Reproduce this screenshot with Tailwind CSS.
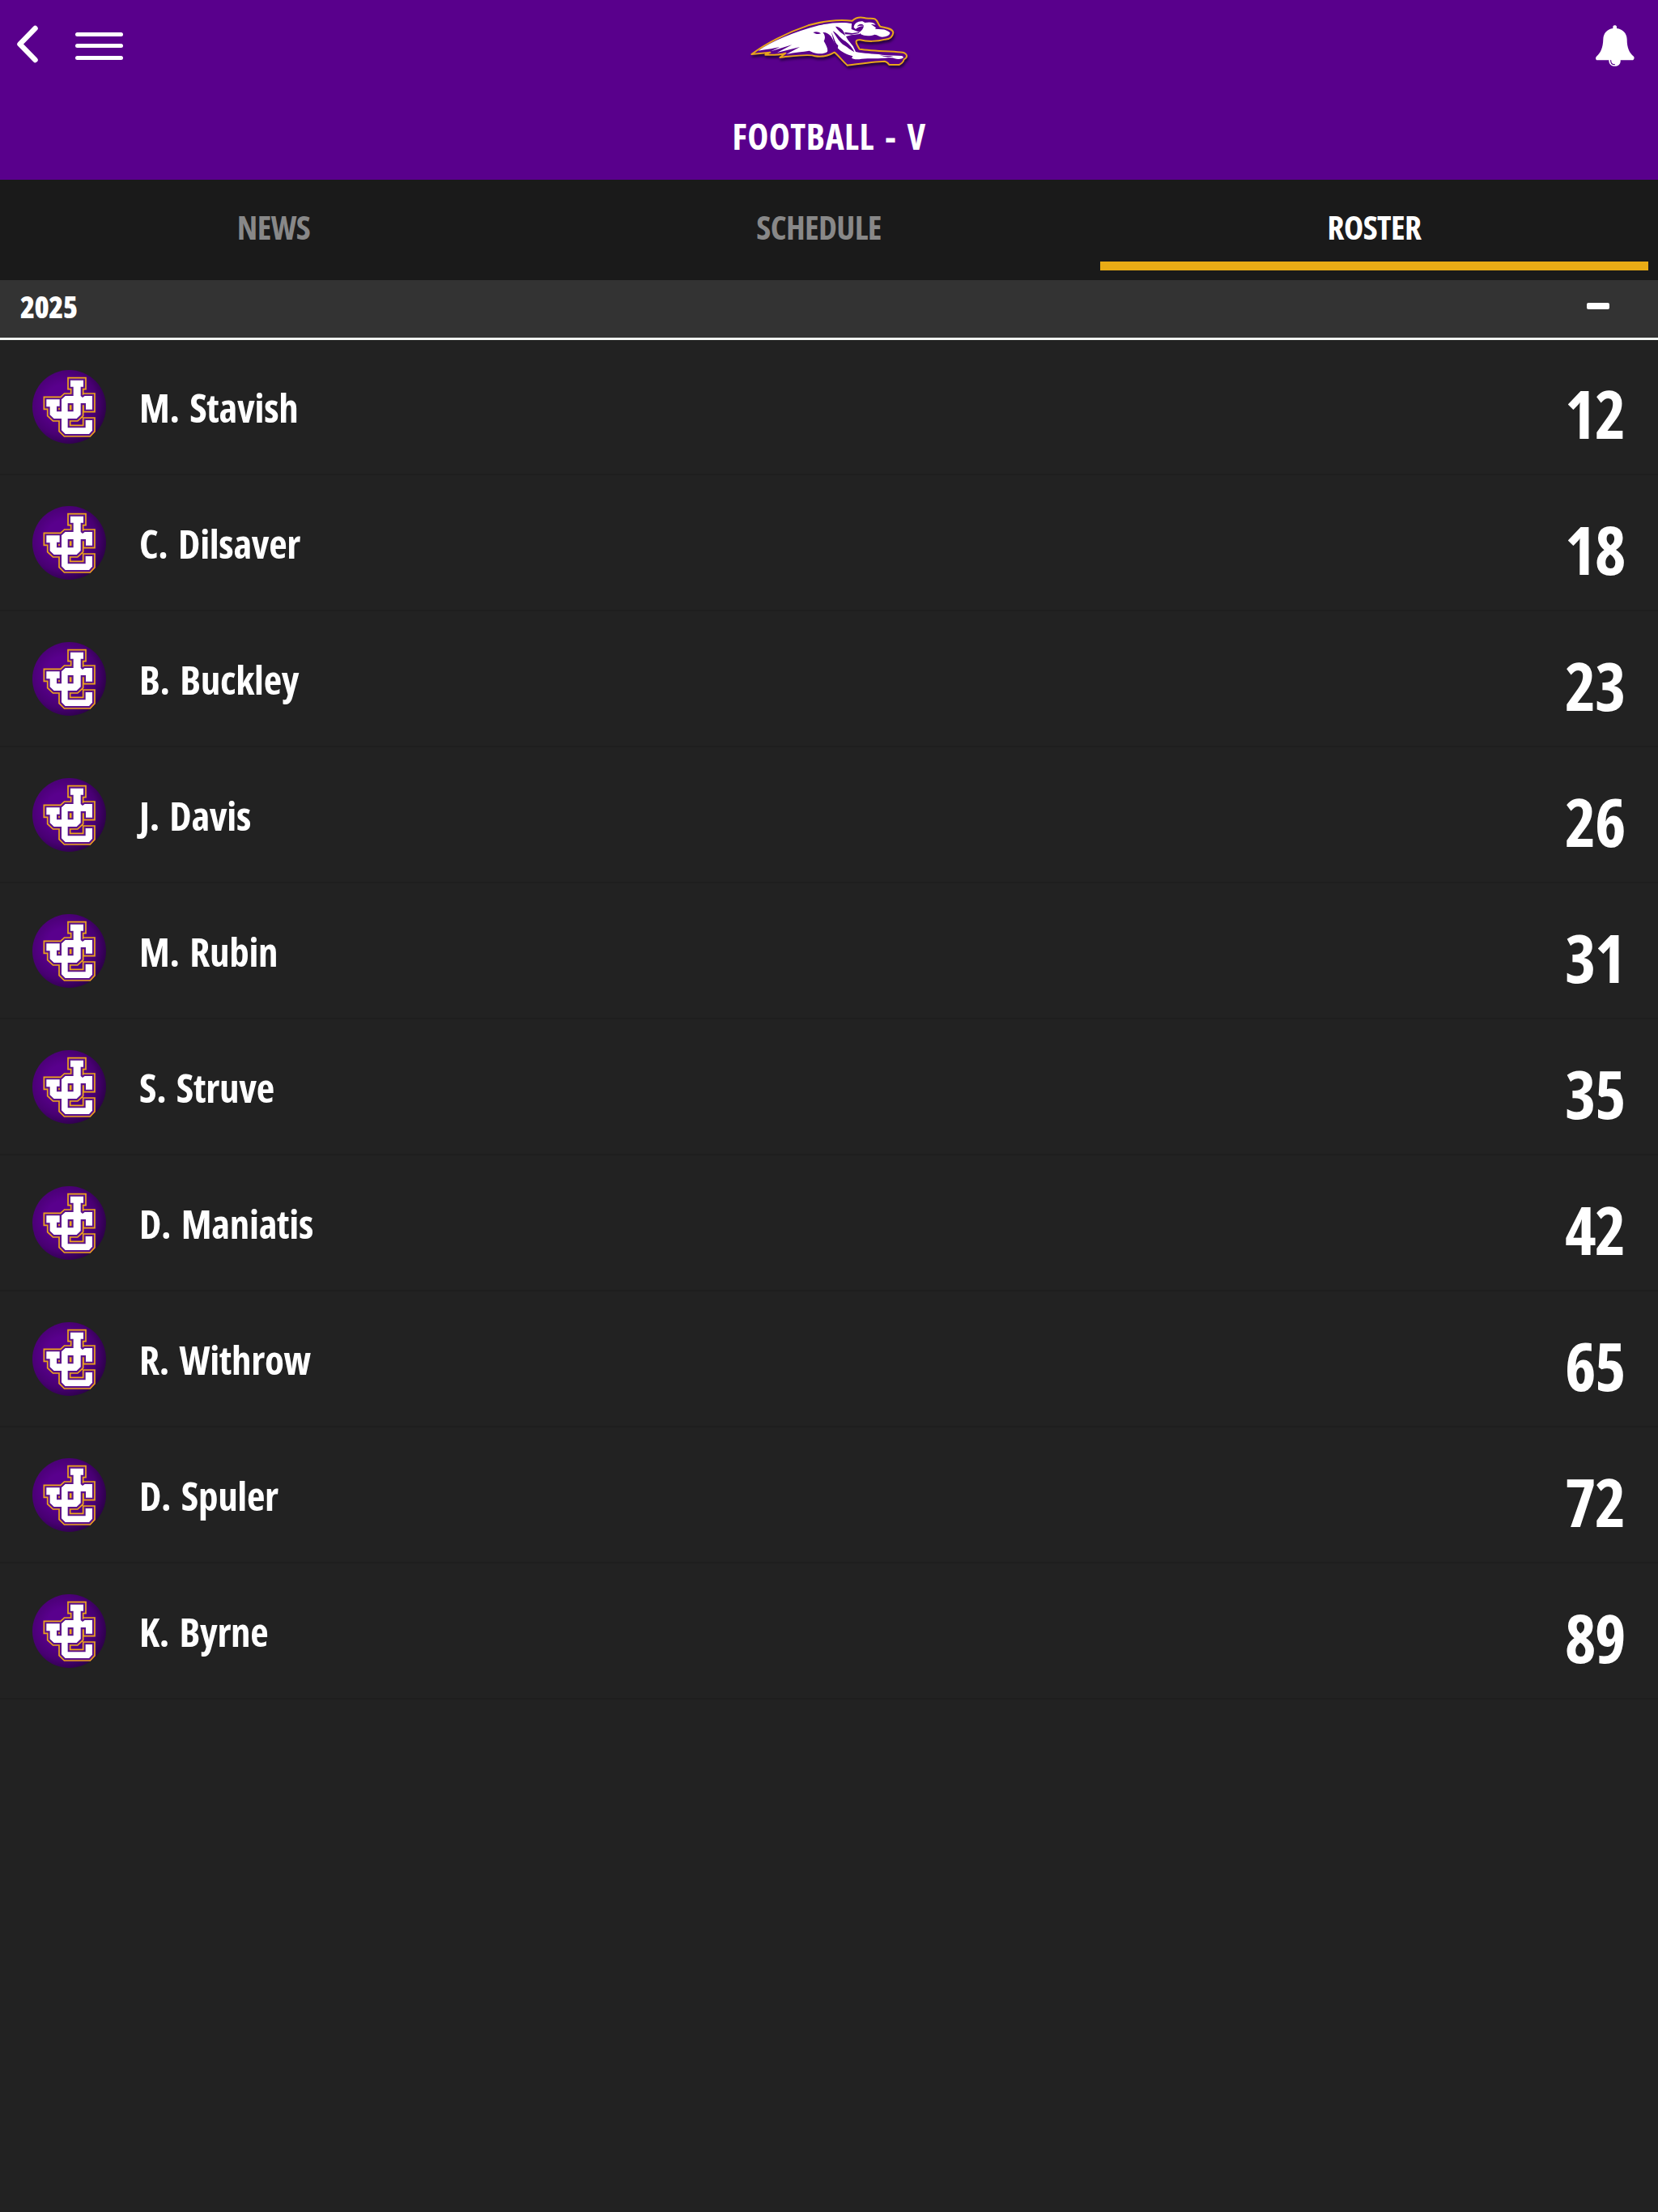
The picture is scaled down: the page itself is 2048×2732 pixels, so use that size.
<!DOCTYPE html>
<html lang="en">

<head>
    <meta charset="UTF-8">
    <meta name="viewport" content="width=device-width, initial-scale=1.0">
    <title>Football - V Roster</title>
    <script src="https://cdn.jsdelivr.net/npm/@tailwindcss/browser@4"></script>
</head>

<body class="min-h-screen bg-[#222222] text-white font-['Open_Sans','Noto_Sans',sans-serif] font-bold font-stretch-condensed">
    <!-- Team badge, reused on every row -->
    <svg class="absolute w-0 h-0" aria-hidden="true">
        <defs>
            <radialGradient id="badgeFill" cx="0.42" cy="0.44" r="0.6">
                <stop offset="0.4" stop-color="#59008d" />
                <stop offset="0.75" stop-color="#480072" />
                <stop offset="1" stop-color="#2c0049" />
            </radialGradient>
            <path id="jc" d="M171 72H219V96H209V130L216 136L224 130H252V180H228V157H209V200L194 214H161V248H227V220H252V258L240 271H152L138 257V214H110L95 200V170H82V143H131V168H120V188H138V143L152 130H182V96H171ZM161 157V188H182V157Z" />
            <symbol id="badge" viewBox="30 34 273 273">
                <circle cx="166.500" cy="170.500" r="136.500" fill="url(#badgeFill)" />
                <use href="#jc" fill="none" stroke="#eda41c" stroke-width="23" />
                <use href="#jc" fill="none" stroke="#5c128a" stroke-width="13" />
                <use href="#jc" fill="#fff" fill-rule="evenodd" />
            </symbol>
        </defs>
    </svg>

    <header class="h-[222px] bg-[#59008c]">
        <div class="h-[110px] grid grid-cols-[1fr_230px_1fr]">
            <div class="flex items-start pl-[20px] pt-[31px] gap-[45px]">
                <svg class="w-7 h-[48px]" viewBox="0 0 28 48" fill="none" stroke="#fff" stroke-width="6.500" stroke-linecap="round" stroke-linejoin="round">
                    <path d="M23.500 4L4.500 23.500L23.500 43" />
                </svg>
                <div class="flex flex-col gap-[9.500px] pt-[8.500px]">
                    <span class="w-[59px] h-[5px] rounded-full bg-white"></span>
                    <span class="w-[59px] h-[5px] rounded-full bg-white"></span>
                    <span class="w-[59px] h-[5px] rounded-full bg-white"></span>
                </div>
            </div>
            <svg class="w-[230px] h-[110px]" viewBox="-3 0 690 330">
                <path class="drop-shadow-[3px_9px_5px_rgba(20,0,40,0.75)]" fill="#59008c" stroke="#e9a51b" stroke-width="6" stroke-linejoin="round" d="M55 201C105 163 185 121 265 94C320 78 380 72 428 77C440 66 455 62 472 66C484 71 500 65 512 70C524 77 523 90 532 98C550 103 578 104 580 121C578 137 565 145 550 146C520 155 480 154 458 148C440 146 440 155 447 168L455 182C500 188 580 191 615 194C633 199 635 212 620 220C618 230 608 238 602 240H565C560 232 556 228 548 227C510 228 440 238 410 242C395 230 375 203 362 194C340 207 320 213 290 208C270 198 210 208 160 213L181 197C160 203 130 204 106 203L124 194Z" />
                <g fill="#fff">
                    <path d="M80 188C130 154 210 118 305 94C350 83 400 81 426 87L425 108L450 118L458 119L456 126L424 130L405 135L412 148L431 171L441 192C470 199 505 198 538 203C560 205 590 205 612 207C622 211 617 218 605 218C590 222 584 211 562 214C530 219 490 216 463 218C450 220 438 222 426 215L430 208C410 203 388 194 371 175C362 163 359 148 349 134C340 124 330 119 319 120C328 130 329 142 323 152C331 167 339 180 336 191C325 201 300 200 284 195L269 188C245 192 215 194 184 201L234 174L150 195L205 166L127 190L160 174C130 181 100 185 80 188Z" />
                    <path d="M434 102C434 87 449 78 466 79L475 84C495 80 508 83 515 92L497 89L516 103L513 107L537 109C550 109 560 114 568 121C567 132 555 137 539 137C527 137 522 128 511 128C495 135 472 134 460 127L455 119C463 115 469 106 471 97C460 96 449 100 441 108Z" />
                </g>
                <g fill="#59008c">
                    <path d="M283 120C294 116 304 118 312 124C302 128 291 126 283 120Z" />
                    <path d="M366 98C383 99 397 111 402 132C390 123 376 115 366 98Z" />
                    <path d="M356 115C375 124 381 142 403 153C418 164 430 179 436 193C421 186 412 175 399 168C382 159 371 139 356 115Z" />
                    <path d="M350 119C363 139 360 153 376 169L374 180C359 166 360 146 350 119Z" />
                    <path d="M400 119L428 123L454 119L453 123L426 128L402 127Z" />
                    <path d="M458 90C463 88 468 90 471 96C462 94 453 95 446 98C448 94 452 91 458 90Z" />
                    <path d="M530 205C545 208 560 207 581 208C565 212 548 212 530 205Z" />
                </g>
            </svg>
            <div class="flex justify-end items-start pr-[29px] pt-[31px]">
                <svg class="w-[48px] h-[51px]" viewBox="95 93 144 153">
                    <path fill="#fff" d="M159 105V99C159 92 173 92 173 99V105C195 108 210 122 211 145C211 178 220 197 236 209C240 214 237 223 230 223H187C190 253 143 253 144 223H102C95 223 93 214 98 209C113 197 122 178 123 145C124 122 138 108 159 105Z" />
                    <path fill="none" stroke="#59008c" stroke-width="3.500" stroke-linecap="round" d="M151 224C151 233 157 239 165 239" />
                </svg>
            </div>
        </div>
        <h1 class="pt-[32px] text-center text-[44px] leading-[52px] tracking-[0.5px] [word-spacing:5px]">FOOTBALL - V</h1>
    </header>

    <nav class="h-[124px] bg-[#1a1a1a] grid grid-cols-[676px_671px_677px] text-[41px] leading-[50px] tracking-[-0.6px] text-center text-[#888888]">
        <a class="pt-[33px]">NEWS</a>
        <a class="pt-[33px]">SCHEDULE</a>
        <a class="ml-[12px] -mr-[12px] pt-[33px] text-white">
            ROSTER
            <span class="block mt-[18px] h-[11px] bg-[#e9ac15]"></span>
        </a>
    </nav>

    <section>
        <div class="h-[74px] bg-[#333333] border-b-3 border-[#f0f3f0] flex items-start justify-between pl-[25px] pr-[60px]">
            <h2 class="pt-[11px] text-[37px] leading-[44px] tracking-[-0.7px] font-extrabold">2025</h2>
            <span class="mt-[28px] w-[28px] h-2 rounded-[2px] bg-white"></span>
        </div>
        <ul id="roster" class="-mt-px"></ul>
    </section>

    <script>
        const players = [
            ["M. Stavish", 12],
            ["C. Dilsaver", 18],
            ["B. Buckley", 23],
            ["J. Davis", 26],
            ["M. Rubin", 31],
            ["S. Struve", 35],
            ["D. Maniatis", 42],
            ["R. Withrow", 65],
            ["D. Spuler", 72],
            ["K. Byrne", 89],
        ];

        document.getElementById("roster").innerHTML = players.map(([name, number]) => `
            <li class="h-[168px] flex items-center pl-10 pr-[41px] border-b-2 border-[#1e1e1e]">
                <svg class="size-[91px]"><use href="#badge" /></svg>
                <span class="ml-[41px] mt-0.5 text-[49px] leading-[60px] tracking-[-0.3px] [word-spacing:4px]">${name}</span>
                <span class="ml-auto mt-4 text-[82px] leading-[90px] tracking-[-1.5px]">${number}</span>
            </li>`).join("");
    </script>
</body>

</html>
